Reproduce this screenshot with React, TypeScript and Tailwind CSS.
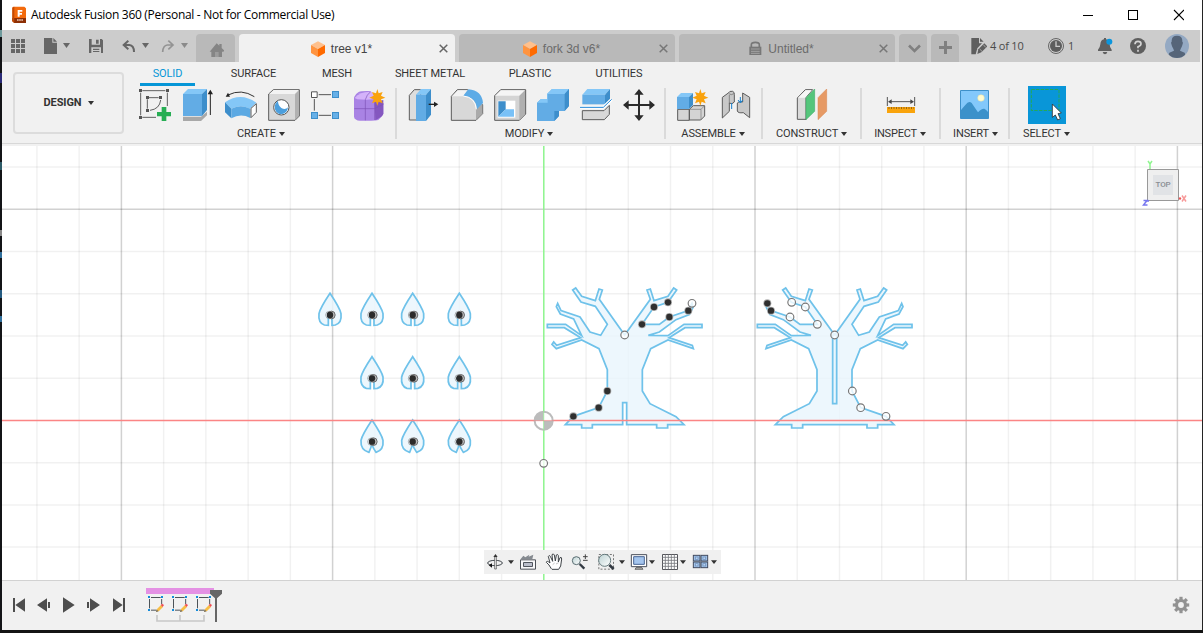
import React from "react";

type Kids = { children?: React.ReactNode };

/* Drawing surface: art uses a 3-units-per-pixel grid. */
function Art({ x, y, w, h, className = "", children }: { x: number; y: number; w: number; h: number; className?: string } & Kids) {
  return (
    <svg width={w} height={h} viewBox={`${x} ${y} ${w * 3} ${h * 3}`} className={`block shrink-0 ${className}`}>
      {children}
    </svg>
  );
}

function Caret({ className = "" }: { className?: string }) {
  return (
    <svg width="6" height="4" viewBox="0 0 6 4" className={`block shrink-0 ${className}`}>
      <path d="M0 0H6L3 4Z" fill="#333" />
    </svg>
  );
}

function OrangeCube() {
  return (
    <svg width="14" height="16" viewBox="0 0 42 48" className="block shrink-0">
      <path d="M21 1L42 12L21 24L0 12Z" fill="#ffc08c" />
      <path d="M0 12L21 24V48L0 36Z" fill="#ff9440" />
      <path d="M42 12L21 24V48L42 36Z" fill="#ff6a00" />
    </svg>
  );
}

function CloseX({ color }: { color: string }) {
  return (
    <svg width="9" height="9" viewBox="0 0 9 9" className="block shrink-0">
      <path d="M.7 .7L8.3 8.3M8.3 .7L.7 8.3" stroke={color} strokeWidth="1.5" />
    </svg>
  );
}

const star = "M1132 267L1136 280L1148 276L1143 287L1156 293L1143 298L1148 310L1136 305L1132 317L1128 305L1116 310L1121 298L1108 293L1121 287L1116 276L1128 280Z";

function TitleBar() {
  return (
    <div className="flex h-[30px] shrink-0 items-center bg-white pl-[10px] pr-[18px]">
      <Art x={33} y={15} w={15} h={18}>
        <path d="M36 17H70L75 22V66H40L34 60V20Z" fill="#f36a0c" />
        <path d="M34 51H75V66H40L34 61Z" fill="#8d2f05" />
        <path d="M34 20L40 17V66L34 60Z" fill="#c24a05" />
        <path d="M50 27H64V32H56V36H63V41H56V47H50Z" fill="#fff" />
        <path d="M48 57H66" stroke="#e8c8b8" strokeWidth="4" strokeDasharray="5 1.5" />
      </Art>
      <span className="ml-[4px] whitespace-nowrap font-['Open_Sans',sans-serif] text-[12px] leading-[18px] tracking-[-0.3px] text-black">
        Autodesk Fusion 360 (Personal - Not for Commercial Use)
      </span>
      <svg width="102" height="12" viewBox="0 0 102 12" className="ml-auto block" shapeRendering="crispEdges">
        <path d="M1 6.5H11M46.5 1.5H55.5V10.5H46.5Z" stroke="#000" fill="none" />
        <path d="M92 1L102 11M102 1L92 11" stroke="#000" strokeWidth="1.1" fill="none" shapeRendering="auto" />
      </svg>
    </div>
  );
}

function DocTab({ label, icon, active }: { label: string; icon: React.ReactNode; active?: boolean }) {
  return (
    <div className={`mr-[4px] flex h-7 w-[216px] items-center rounded-t-[4px] pr-[7px] ${active ? "bg-[#f1f1f1] text-[#444]" : "bg-[#b9b9b9] text-[#6b6b6b]"}`}>
      <div className="flex flex-1 items-center justify-center gap-[6px] pl-[5px] pt-px font-['Liberation_Sans',sans-serif] text-[12px] leading-[16px]">
        {icon}
        <span className="whitespace-nowrap">{label}</span>
      </div>
      <CloseX color={active ? "#666" : "#777"} />
    </div>
  );
}

function TabBar() {
  return (
    <div className="mr-[2px] flex h-8 shrink-0 items-end bg-[#ccc]">
      <Art x={6} y={90} w={194} h={32}>
        <g fill="#666">
          {[33, 48, 63].map((cx) => [117, 132, 147].map((cy) => <rect key={`${cx}-${cy}`} x={cx} y={cy} width="12" height="12" />))}
          <path d="M132 114H157V128H171V162H132ZM160 114L171 125H160Z" />
          <path d="M189 129H210L199.500 144Z" />
          <path fillRule="evenodd" d="M267 117H305L309 121V159H267ZM275 117V134H300V117ZM274 142V159H303V142Z" />
          <path d="M288 119H296V131H288ZM279 146H298V150H279ZM279 153H298V156H279Z" />
          <path d="M426 129H447L436.500 144Z" />
        </g>
        <path d="M385 122L371 135L385 148M371 135H388Q402 136 402 156" fill="none" stroke="#666" strokeWidth="6" />
        <g opacity=".55">
          <path d="M505 122L519 135L505 148M519 135H502Q489 136 488 156" fill="none" stroke="#666" strokeWidth="5" />
          <path d="M543 129H564L553.500 144Z" fill="#555" />
        </g>
      </Art>
      <div className="mr-[4px] flex h-7 w-[39px] items-center justify-center rounded-t-[4px] bg-[#b9b9b9] pl-[2px] pt-[3px]">
        <Art x={627} y={126} w={15} h={14}>
          <path d="M650 127L658 134V129H665V141L673 149L670 152H666V168H634V152H629Z" fill="#858585" />
          <path d="M645 168V153H656V168" fill="#9c9c9c" />
        </Art>
      </div>
      <DocTab active label="tree v1*" icon={<OrangeCube />} />
      <DocTab label="fork 3d v6*" icon={<OrangeCube />} />
      <DocTab
        label="Untitled*"
        icon={
          <Art x={1046} y={125} w={13} h={15}>
            <path d="M1053 143V136Q1053 129 1065 129Q1077 129 1077 136V143" fill="none" stroke="#777" strokeWidth="5" />
            <path d="M1047 142H1083V167H1047Z" fill="#777" />
            <path d="M1052 149H1078M1052 156H1078M1052 162H1078" stroke="#b9b9b9" strokeWidth="2" />
          </Art>
        }
      />
      <div className="mr-[4px] flex h-7 w-7 items-center justify-center rounded-t-[4px] bg-[#b9b9b9] pl-[2px] pt-px">
        <svg width="13" height="9" viewBox="0 0 13 9"><path d="M1 1.500L6.500 7L12 1.500" fill="none" stroke="#808080" strokeWidth="2.600" /></svg>
      </div>
      <div className="flex h-7 w-7 items-center justify-center rounded-t-[4px] bg-[#b9b9b9] pb-px">
        <svg width="13" height="13" viewBox="0 0 13 13"><path d="M6.500 0V13M0 6.500H13" stroke="#808080" strokeWidth="3" /></svg>
      </div>
      <div className="flex h-8 flex-1 items-center font-['Open_Sans',sans-serif] text-[11px] text-[#4a4a4a]">
        <Art x={509} y={108} w={17} h={20} className="ml-[11px]">
          <path d="M513 114H536V130H545L531 145L526 163H513ZM539 114L550 125H539Z" fill="#5e5e5e" />
          <path d="M531 162L534 148L552 130L561 139L543 157Z" fill="#5e5e5e" />
          <path d="M538 147L545 154M549 134L556 142" stroke="#ccc" strokeWidth="2" />
        </Art>
        <span className="ml-[3px] w-[36px] whitespace-nowrap leading-[16px] tracking-[-0.2px]">4 of 10</span>
        <Art x={741} y={111} w={18} h={18} className="ml-[21px]">
          <circle cx="768" cy="138" r="22.500" fill="none" stroke="#666" strokeWidth="3" />
          <circle cx="768" cy="138" r="18" fill="#5e5e5e" />
          <path d="M768 124V139H780" fill="none" stroke="#ccc" strokeWidth="4" />
        </Art>
        <span className="ml-[3px] w-[8px]">1</span>
        <Art x={891} y={108} w={17} h={20} className="ml-[21px]">
          <path d="M894 153V149Q900 144 901 133Q902 120 912 118V114H918V118Q928 120 929 133Q929 144 935 149V153ZM908 156H922Q920 163 915 163Q910 163 908 156Z" fill="#606060" />
          <circle cx="928" cy="125" r="9" fill="#0b96dd" />
        </Art>
        <Art x={987} y={111} w={18} h={18} className="ml-[15px]">
          <circle cx="1014" cy="138" r="24" fill="#5e5e5e" />
          <path d="M1005 133Q1005 124 1014 124Q1023 124 1023 131Q1023 137 1014 140V145M1014 149V155" fill="none" stroke="#d4d4d4" strokeWidth="5" />
        </Art>
        <Art x={1095} y={101} w={24} h={24} className="ml-[18px] rounded-full">
          <rect x="1095" y="101" width="72" height="74" fill="#94a9c3" />
          <path d="M1131 106Q1148 106 1147 124L1149 127L1146 138Q1141 148 1140 151L1154 157Q1157 164 1155 174H1107Q1104 162 1108 157L1122 151Q1121 147 1116 138L1113 127L1115 124Q1114 106 1131 106Z" fill="#566579" />
        </Art>
      </div>
    </div>
  );
}

const workspaces = [
  { label: "SOLID", cls: "w-[55px] text-[#0696d7]" },
  { label: "SURFACE", cls: "ml-[35px] w-[47px]" },
  { label: "MESH", cls: "ml-[46px] w-[28px]" },
  { label: "SHEET METAL", cls: "ml-[45px] w-[68px]" },
  { label: "PLASTIC", cls: "ml-[45px] w-[42px]" },
  { label: "UTILITIES", cls: "ml-[46px] w-[44px]" },
];

function Group({ label, width, labelPad = "", children }: { label: string; width: string; labelPad?: string } & Kids) {
  return (
    <div className={`flex shrink-0 flex-col items-center ${width}`}>
      <div className="flex h-[38px] justify-center">{children}</div>
      <div className={`flex h-5 items-center justify-center gap-[3px] whitespace-nowrap ${labelPad}`}>
        <span>{label}</span>
        <Caret />
      </div>
    </div>
  );
}

function Sep({ className }: { className: string }) {
  return <div className={`mt-[2px] h-[51px] w-[2px] shrink-0 bg-[#dadada] ${className}`} />;
}

const Slot = ({ x, children }: { x: number } & Kids) => (
  <Art x={x} y={258} w={43} h={38}>{children}</Art>
);

const edge = { stroke: "#5c5c5c", strokeWidth: 3, strokeLinejoin: "round" as const };

function Ribbon() {
  return (
    <div className="flex h-[81px] shrink-0 bg-[#f1f1f1] font-['Roboto',sans-serif] text-[11px] leading-[14px] tracking-[-0.1px] text-[#333]">
      <div className="ml-[11px] mt-[10px] flex h-[62px] w-[111px] shrink-0 items-center justify-center gap-[6px] rounded-[4px] border-2 border-[#dcdcdc] font-bold">
        <span>DESIGN</span>
        <Caret />
      </div>
      <div className="flex flex-1 flex-col">
        <div className="flex h-6 shrink-0 pl-[16px]">
          {workspaces.map((w, i) => (
            <div key={w.label} className={`flex shrink-0 flex-col items-center whitespace-nowrap pt-[5px] ${w.cls}`}>
              {w.label}
              {i === 0 && <div className="mt-[2px] h-[3px] w-full bg-[#0696d7]" />}
            </div>
          ))}
        </div>
        <div className="flex shrink-0 pl-[9px]">
          <Group label="CREATE" width="w-[258px]" labelPad="pr-[2px]">
            <Slot x={399}>
              <path d="M427 272H496M422 278V346M502 278V318M427 352H468M447 293H476M442 298V326M450 331Q479 327 482 300" fill="none" stroke="#606060" strokeWidth="3" />
              <path d="M417 267H426V276H417ZM498 267H507V276H498ZM417 348H426V357H417ZM438 288H447V297H438ZM477 288H486V297H477ZM438 327H447V336H438Z" fill="#555" />
              <path d="M485 321H499V336H513V349H499V363H485V349H471V336H485Z" fill="#27ae54" />
            </Slot>
            <Slot x={528}>
              <path d="M549 350H603L621 335V346L603 363H549Z" fill="#a8a8a8" />
              <path d="M549 282L564 267H621L606 282Z" fill="#84c7f7" />
              <path d="M549 282H606V348H549Z" fill="#62ace5" />
              <path d="M606 282L621 267V330L606 348Z" fill="#3d8ecb" />
              <path d="M631 276V345" stroke="#222" strokeWidth="3" />
              <path d="M631 269L639 283H623Z" fill="#222" />
            </Slot>
            <Slot x={657}>
              <path d="M675 307Q722 274 769 308L750 326Q722 311 694 326Z" fill="#84c7f7" />
              <path d="M675 307L694 326V355L675 337Z" fill="#3d8ecb" />
              <path d="M694 326Q722 311 751 326V354Q722 339 694 355Z" fill="#5ca9e3" />
              <path d="M753 325L769 311V337L753 353Z" fill="#fff" {...edge} />
              <path d="M684 285Q724 265 763 290" fill="none" stroke="#333" strokeWidth="3" />
              <path d="M677 290L684 278L690 290Z" fill="#222" />
            </Slot>
            <Slot x={786}>
              <path d="M806 282L820 269H898V348L885 361H806Z" fill="#d8d8d8" {...edge} />
              <path d="M808 282L821 270H896L884 282Z" fill="#f3f3f3" />
              <path d="M885 283L897 271V347L885 359Z" fill="#b1b1b1" />
              <circle cx="844" cy="322" r="23" fill="#fff" stroke="#555" strokeWidth="3" />
              <path d="M834 303Q824 310 824 323Q826 341 844 343Q862 341 864 322Q856 331 844 324Q834 316 834 303Z" fill="#4c9fdd" />
            </Slot>
            <Slot x={915}>
              <path d="M956 284H993M943 297V332M956 346H993" stroke="#555" strokeWidth="3" />
              <path d="M934.500 275.500H951.500V292.500H934.500Z" fill="#fff" stroke="#555" strokeWidth="3" />
              <path d="M996 273H1017V294H996ZM933 336H954V357H933ZM996 336H1017V357H996Z" fill="#3e8fca" />
              <path d="M999 276H1014V291H999ZM936 339H951V354H936ZM999 339H1014V354H999Z" fill="#66b0e8" />
            </Slot>
            <Slot x={1044}>
              <path d="M1062 292Q1064 283 1076 276Q1084 272 1110 273L1150 310V340Q1148 350 1136 359Q1130 363 1080 362Q1064 361 1062 350Z" fill="#a983e4" />
              <path d="M1064 294Q1080 274 1112 275L1138 295Q1110 302 1072 298Z" fill="#d4b2fa" />
              <path d="M1124 306L1150 300V342Q1147 350 1126 361Z" fill="#8457bf" />
              <path d="M1063 326H1124L1151 312M1096 299V361M1124 306V360M1096 299Q1100 284 1112 275" fill="none" stroke="#7c50b5" strokeWidth="2" />
              <path d={star} fill="#f9a20d" />
            </Slot>
          </Group>
          <Sep className="ml-[4px] mr-[5px]" />
          <Group label="MODIFY" width="w-[258px]" labelPad="pr-[4px]">
            <Slot x={6}>
              <path d="M28 286L43 269H62V360H28Z" fill="#ddd" {...edge} />
              <path d="M48 284L63 267H93L78 284Z" fill="#84c7f7" />
              <path d="M48 284H78V363H48Z" fill="#62ace5" />
              <path d="M78 284L93 267V344L78 363Z" fill="#3d8ecb" />
              <path d="M86 313H106" stroke="#222" strokeWidth="4" />
              <path d="M102 305L115 313L102 321Z" fill="#222" />
            </Slot>
            <Slot x={135}>
              <path d="M154 289L172 269H203L248 314V341L228 361H154Z" fill="#d8d8d8" {...edge} />
              <path d="M156 289L174 271H202L190 289Z" fill="#f3f3f3" />
              <path d="M228 327L247 310V341L228 360Z" fill="#aaa" />
              <path d="M190 287L205 268Q246 272 249 309L231 327Q228 291 190 287Z" fill="#5dabe6" />
              <path d="M190 288Q226 292 229 328" fill="none" stroke="#fff" strokeWidth="3" />
            </Slot>
            <Slot x={264}>
              <path d="M284 287L302 269H377V342L358 361H284Z" fill="#d4d4d4" {...edge} />
              <path d="M286 287L303 271H375L358 287Z" fill="#f5f5f5" />
              <path d="M358 288L375 271V341L358 359Z" fill="#b0b0b0" />
              <path d="M293 302H346V353H293Z" fill="#fff" />
              <path d="M295 304H317V328L295 350Z" fill="#3d8ecb" />
              <path d="M317 328H342V350H295Z" fill="#79c1f7" />
            </Slot>
            <Slot x={393}>
              <path d="M411 308L423 297H441V282L456 267H507V318L494 333H477V348L463 363H411Z" fill="#62ace5" />
              <path d="M411 308L423 297H441V282L456 267H507L494 282H443V308Z" fill="#84c7f7" />
              <path d="M494 282L507 267V318L494 333ZM463 333H477V348L463 363Z" fill="#3d8ecb" />
            </Slot>
            <Slot x={522}>
              <path d="M547 284L562 267H630L615 284Z" fill="#84c7f7" />
              <path d="M547 284H615V313H547Z" fill="#62ace5" />
              <path d="M615 284L630 267V298L615 313Z" fill="#3d8ecb" />
              <path d="M547 332H612L628 316V343L613 359H547Z" fill="#d8d8d8" {...edge} />
              <path d="M540 322H610L635 298" fill="none" stroke="#fff" strokeWidth="9" />
              <path d="M540 322H610L635 298" fill="none" stroke="#2186d6" strokeWidth="3" />
            </Slot>
            <Slot x={651}>
              <path d="M717 280V350M684 315H750" stroke="#2b2b2b" strokeWidth="6" />
              <path d="M717 267L731 284H703ZM717 363L731 346H703ZM669 315L686 301V329ZM765 315L748 301V329Z" fill="#2b2b2b" />
            </Slot>
          </Group>
          <Sep className="ml-[4px] mr-[6px]" />
          <Group label="ASSEMBLE" width="w-[86px]" labelPad="pr-[4px]">
            <Slot x={816}>
              <path d="M833 328H868V361H833ZM868 328L880 317H914V348L902 360H868Z" fill="#d4d4d4" {...edge} />
              <path d="M870 328H903V359M903 328L913 318" fill="none" stroke="#777" strokeWidth="2" />
              <path d="M831 291L843 279H879L867 291Z" fill="#84c7f7" />
              <path d="M831 291H867V327H831Z" fill="#62ace5" />
              <path d="M867 291L879 279V315L867 327Z" fill="#3d8ecb" />
              <path d={star} fill="#f9a20d" transform="translate(-231 0)" />
            </Slot>
            <Slot x={945}>
              <path d="M967 292L985 279Q988 272 998 274Q1004 277 1003 283V306Q996 315 988 309V334L967 354Z" fill="#c8c8c8" {...edge} />
              <path d="M986 281Q994 287 1002 281M988 285V310" fill="none" stroke="#666" strokeWidth="2" />
              <path d="M1028 279L1049 292V353L1030 338Q1014 340 1012 333V309Q1015 303 1028 306Z" fill="#c8c8c8" {...edge} />
              <path d="M995 309V327M1021 291V307" stroke="#1681cf" strokeWidth="3" />
              <path d="M1014 300L1021 309L1028 300" fill="none" stroke="#1681cf" strokeWidth="3" />
            </Slot>
          </Group>
          <Sep className="ml-[3px] mr-[13px]" />
          <Group label="CONSTRUCT" width="w-[72px]" labelPad="pr-px">
            <Slot x={-27}>
              <path d="M-8 294L16 269H38L18 292V358H-8Z" fill="#dadada" {...edge} />
              <path d="M-6 293L17 271H35L16 293Z" fill="#f7f7f7" />
              <path d="M18 293L44 267V334L18 359Z" fill="#54c57b" stroke="#37a860" strokeWidth="1.500" />
              <path d="M54 293L80 267V334L54 359Z" fill="#e69a65" stroke="#d9844c" strokeWidth="1.500" />
            </Slot>
          </Group>
          <Sep className="ml-[12px] mr-[13px]" />
          <Group label="INSPECT" width="w-[51px]" labelPad="pr-px tracking-[-0.2px]">
            <Slot x={237}>
              <path d="M262 291V318M344 291V318M270 305H336" stroke="#555" strokeWidth="3" />
              <path d="M264 305L275 298V312ZM342 305L331 298V312Z" fill="#444" />
              <path d="M261 321H345V339H261Z" fill="#f9a40c" />
              <path d="M266 324H342" stroke="#704d10" strokeWidth="6" strokeDasharray="2 5.500" />
            </Slot>
          </Group>
          <Sep className="ml-[13px] mr-[12px]" />
          <Group label="INSERT" width="w-[45px]">
            <Slot x={462}>
              <path d="M481.500 271.500H565.500V355.500H481.500Z" fill="#83c8fb" stroke="#3d90ca" strokeWidth="3" />
              <path d="M483 330Q490 322 496 315Q506 301 515 309Q525 324 534 337Q544 325 553 326Q560 330 564 336V354H483Z" fill="#3c91ca" />
              <circle cx="543" cy="294" r="10" fill="#fffbd0" stroke="#e5dba0" strokeWidth="1.500" />
            </Slot>
          </Group>
          <Sep className="ml-[10px] mr-[12px]" />
          <Group label="SELECT" width="w-[49px]">
            <Slot x={675}>
              <path d="M684 258H798V372H684Z" fill="#0996d8" />
              <path d="M694 268.500H777V331.500H694Z" fill="none" stroke="#24a958" strokeWidth="3" strokeDasharray="10 4" />
              <path d="M757 312L784 339L774 341L781 356L773 360L766 345L757 352Z" fill="#fff" stroke="#333" strokeWidth="2.500" />
            </Slot>
          </Group>
        </div>
      </div>
    </div>
  );
}

const leftHalf =
  "L208 88L217 60L207 57L196 92L155 79L137 54L128 60L153 96L196 109L232 163L212 196L180 186L150 141L93 122L83 100L79 110L91 132L131 147L155 197L107 163H52V173H103L152 203L80 226L71 216L66 223L79 236L155 210L207 236L232 299V363L206 413L130 439L106 464H155V474H187V464H278";
const rightHalf =
  "H380V474H413V464H462L438 440L360 401L337 363V299L362 236L414 210L490 236L487 226L417 203L465 173H516V163H462L414 197L355 196L388 186L438 149L478 134L489 112L486 100L475 122L418 141L388 163H336L372 111L414 97L440 60L431 54L414 79L372 92L361 57L351 60L361 88Z";
/* The second trunk mirrors the first, except for the foot on its plain side. */
const plainFoot = leftHalf;

const Solid = ({ p }: { p: number[] }) => (
  <g>
    <circle cx={p[0]} cy={p[1]} r="12" fill="#b0b0b0" />
    <circle cx={p[0]} cy={p[1]} r="9.500" fill="#2f2f2f" />
  </g>
);
const Hollow = ({ p }: { p: number[] }) => <circle cx={p[0]} cy={p[1]} r="11.500" fill="#fff" fillOpacity=".8" stroke="#777" strokeWidth="3.500" />;

function Canvas() {
  const step = 42.24;
  const cols = Array.from({ length: 28 }, (_, i) => i - 12);
  const rows = Array.from({ length: 10 }, (_, i) => i - 6);
  const leaves = [
    [90, 0], [216, 0], [338, 0], [478, 0],
    [216, 190], [338, 190], [478, 190],
    [216, 380], [338, 380], [478, 380],
  ];
  return (
    <div className="relative h-[434px] shrink-0 bg-white">
      <svg width="1200" height="434" viewBox="2 146 1200 434" className="block">
        <g stroke="#000" strokeWidth="1.500">
          {cols.map((i) => i !== 0 && <path key={i} d={`M${543.800 + i * step} 146V580`} strokeOpacity={i % 5 === 0 ? 0.18 : 0.055} />)}
          {rows.map((i) => i !== 0 && <path key={i} d={`M2 ${420.400 + i * step}H1202`} strokeOpacity={i % 5 === 0 ? 0.18 : 0.055} />)}
        </g>
        <path d="M543.800 146V580" stroke="#8df58d" strokeWidth="1.500" />
        <g fill="#e9f5fd" fillOpacity=".8" stroke="#6fc2ea" strokeWidth="5.200" strokeLinejoin="miter">
          <path transform="translate(530 270) scale(.33333)" d={`M284 195${leftHalf}V398H290V464${rightHalf}`} />
          <g transform="translate(740 270) scale(.33333)">
            <path transform="translate(568 0) scale(-1 1)" d={`M284 195${plainFoot}${rightHalf}`} />
            <path d="M278 195H290V401H278Z" />
          </g>
          <g transform="translate(300 280) scale(.33333)">
            {leaves.map(([x, y]) => (
              <path
                key={`${x}-${y}`}
                transform={`translate(${x} ${y})`}
                d={y === 380
                  ? "M0 40Q-30 85 -33 101Q-35 130 -9 137L-4 124L0 112L4 124L12 137Q36 130 33 101Q30 85 0 40Z"
                  : "M0 40Q-30 85 -33 101Q-36 129 -17 135L-5 136V109H6V136L16 135Q36 129 33 101Q30 85 0 40Z"}
              />
            ))}
          </g>
        </g>
        <path d="M2 420.500H1202" stroke="#fb8585" strokeWidth="1.300" />
        <g transform="translate(300 280) scale(.33333)">
          {leaves.map(([x, y]) => (
            <g key={`${x}-${y}`}>
              <circle cx={x + 4} cy={y + 105} r="11.500" fill="#bdbdbd" stroke="#666" strokeWidth="3" />
              <circle cx={x - 2} cy={y + 105} r="11" fill="none" stroke="#888" strokeWidth="2" />
              <circle cx={x} cy={y + 105} r="9.500" fill="#2b2b2b" />
            </g>
          ))}
        </g>
        <g transform="translate(530 270) scale(.33333)">
          <circle cx="41" cy="452" r="27" fill="#fff" fillOpacity=".85" stroke="#bcbcbc" strokeWidth="6" />
          <path d="M41 452V425A27 27 0 0 0 14 452ZM41 452V479A27 27 0 0 0 68 452Z" fill="#bcbcbc" />
          <path d="M41 421V483" stroke="#8df58d" strokeOpacity=".6" strokeWidth="3" />
          <path d="M11 452H71" stroke="#f96a6a" strokeOpacity=".5" strokeWidth="3" />
          {[[336, 163], [372, 111], [414, 97], [418, 141], [475, 122], [232, 363], [206, 413], [130, 439]].map((p) => <Solid key={p[0]} p={p} />)}
          {[[284, 195], [486, 100], [41, 580]].map((p) => <Hollow key={p[0]} p={p} />)}
        </g>
        <g transform="translate(740 270) scale(.33333)">
          {[[82, 100], [93, 122]].map((p) => <Solid key={p[0]} p={p} />)}
          {[[155, 97], [196, 111], [150, 141], [232, 163], [284, 195], [337, 363], [362, 413], [438, 439]].map((p) => <Hollow key={p[0]} p={p} />)}
        </g>
      </svg>
      <div className="absolute right-[14px] top-[12px] h-[54px] w-[46px]">
        <svg width="46" height="54" viewBox="1142 158 46 54" className="absolute left-0 top-0 block">
          <path d="M1147.500 169.500H1178.500V200.500H1147.500Z" fill="#efefef" stroke="#999" />
          <path d="M1153 175H1173V195H1153Z" fill="#e1e3e6" />
          <path d="M1148 161L1150 164L1152 161M1150 164V169" fill="none" stroke="#8ff58f" strokeWidth="1.500" />
          <path d="M1182 195.500L1186 201.500M1186 195.500L1182 201.500" stroke="#f79a9a" strokeWidth="1.500" />
          <circle cx="1180" cy="198.500" r="1.200" fill="#ee5555" />
          <path d="M1143.500 200.500H1147L1143.500 205H1147.500M1147 201H1149" fill="none" stroke="#7777f0" strokeWidth="1.500" />
        </svg>
        <div className="absolute left-[11px] top-[17px] flex h-5 w-5 items-center justify-center font-['Roboto',sans-serif] text-[8px] font-medium leading-none tracking-[-0.2px] text-[#898d93]">TOP</div>
      </div>
      <div className="absolute left-[482px] top-[404px] flex h-6 w-[237px] bg-[#f0f0f0]">
        <NavIcons />
      </div>
    </div>
  );
}

function NavIcons() {
  const line = { fill: "none", stroke: "#40464c", strokeWidth: 3 };
  return (
    <Art x={42} y={30} w={237} h={24}>
      <defs>
        <linearGradient id="lens" x2="1" y2="1"><stop stopColor="#bcd2d3" /><stop offset="1" stopColor="#fff" /></linearGradient>
      </defs>
      <ellipse cx="75" cy="69" rx="22" ry="8" {...line} />
      <path d="M74 50H79V87H74Z" fill="#f7f7f7" stroke="#444" strokeWidth="2" />
      <path d="M70 51L76.500 42L83 51Z" fill="#333" />
      <path d="M56 76L66 70V83Z" fill="#111" />
      {[123, 456, 546, 639, 732].map((x) => <path key={x} d={`M${x - 9} 61H${x + 9}L${x} 72Z`} fill="#333" />)}
      <path d="M151.500 59.500H196.500V87.500H151.500Z" fill="#f8f8fa" stroke="#4d5158" strokeWidth="3" />
      <path d="M160.500 67.500H187.500V79.500H160.500Z" fill="#b9bdca" stroke="#50555e" strokeWidth="3" />
      <path d="M152 57L160 47L166 52L178 44L176 50L190 44L187 57Z" fill="#858a90" />
      <path d="M244 86Q237 73 229 67Q230 60 240 69L235 49Q237 44 241 49L248 64L246 44Q250 39 253 45L256 63L259 45Q263 41 265 47V66L270 53Q275 50 275 57L272 78L266 88H246Z" fill="#fff" stroke="#3f4448" strokeWidth="3" strokeLinejoin="round" />
      <path d="M248 74L254 69M258 72L266 68" stroke="#888" strokeWidth="1.500" />
      <circle cx="319" cy="62" r="12" fill="url(#lens)" stroke="#596d72" strokeWidth="3" />
      <path d="M329 72L343 86" stroke="#333a43" strokeWidth="7" />
      <path d="M339 50H353M346 43V57M339 61H353" stroke="#444" strokeWidth="3" />
      <path d="M386.500 43.500H430.500V87.500H386.500Z" fill="none" stroke="#777" strokeWidth="3" strokeDasharray="6 5" />
      <circle cx="404" cy="61" r="18" fill="url(#lens)" stroke="#657a7d" strokeWidth="3" />
      <path d="M418 75L431 87" stroke="#333a43" strokeWidth="8" />
      <path d="M484 44H530V80H484Z" fill="#fff" stroke="#484c58" strokeWidth="3" />
      <path d="M491 50H523V73H491Z" fill="#a4c5ee" stroke="#4a6795" strokeWidth="3" />
      <path d="M499 82H515L519 88H495Z" fill="#a8a8a8" stroke="#444" strokeWidth="2" />
      <path d="M577.500 43.500H622.500V88.500H577.500Z" fill="#fff" stroke="#55565b" strokeWidth="3" />
      <path d="M586 43V88M595 43V88M604 43V88M613 43V88M577 52H622M577 61H622M577 70H622M577 79H622" stroke="#76777d" strokeWidth="2.500" />
      {[[670, 46], [693, 46], [670, 66], [693, 66]].map(([x, y]) => (
        <g key={`${x}-${y}`}>
          <rect x={x} y={y} width="20" height="17" fill="#9fc0e7" stroke="#424c60" strokeWidth="3" />
          <rect x={x + 6} y={y + 5} width="8" height="7" fill="#b6d2f1" stroke="#6b8bb6" strokeWidth="2" />
        </g>
      ))}
    </Art>
  );
}

function Timeline() {
  return (
    <div className="flex h-[50px] shrink-0 items-start border-t border-[#d2d2d2] bg-[#f1f1f1] pr-[12px]">
      <Art x={6} y={63} w={136} h={48}>
        <path fill="#4d4d4d" d="M39 114H45V156H39ZM75 115V155L46 135ZM111 135L141 115V155ZM144 126H150V144H144ZM189 112V158L224 135ZM261 126H267V144H261ZM270 115V155L300 135ZM339 115V155L368 135ZM369 114H375V156H369Z" />
      </Art>
      <Art x={414} y={63} w={100} h={48}>
        <path d="M438 84H642V102H438Z" fill="#e491e4" />
        {[0, 72, 144].map((dx) => (
          <g key={dx} transform={`translate(${dx} 0)`}>
            <path d="M453 112.500H482M448.500 117V145M485 117V132M453 150.500H470" fill="none" stroke="#4d5358" strokeWidth="3" />
            <path d="M444 108H450V114H444ZM483 108H489V114H483ZM444 147H450V153H444Z" fill="#138bd9" />
            <path d="M471 147L483 135L489 141L477 153L468 156Z" fill="#f7bd45" />
            <path d="M482 135L486 131L492 135L488 141Z" fill="#f04b52" />
            <path d="M468 156L470 149L476 154Z" fill="#666" />
          </g>
        ))}
        <path d="M471 165V183H612V165M540 165V183" fill="none" stroke="#c8c8c8" strokeWidth="5" />
        <path d="M630 90H666V101L651 115V186H645V115L630 101Z" fill="#666" />
      </Art>
      <svg width="18" height="18" viewBox="-9 -9 18 18" className="ml-auto mt-[15px] block">
        <circle r="4.500" fill="none" stroke="#929292" strokeWidth="3.200" />
        {[0, 45, 90, 135, 180, 225, 270, 315].map((a) => <rect key={a} x="-1.600" y="-8.200" width="3.200" height="3.500" fill="#929292" transform={`rotate(${a})`} />)}
      </svg>
    </div>
  );
}

export default function App() {
  return (
    <div className="flex h-[633px] w-[1203px] flex-col overflow-hidden bg-[#141414]">
      <div className="flex h-[630px]">
        <div className="flex w-[2px] shrink-0 flex-col bg-[#131417]">
          <div className="mt-[30px] h-[7px] bg-[#6f9a9c]" />
          <div className="mt-[36px] h-[10px] bg-[#2b2b78]" />
          <div className="mt-[79px] h-[8px] bg-[#2d5b68]" />
          <div className="mt-[60px] h-[6px] bg-[#888]" />
          <div className="mt-[16px] h-[6px] bg-[#2f6f9c]" />
          <div className="mt-[32px] h-[8px] bg-[#245a80]" />
          <div className="mt-[18px] h-[6px] bg-[#2f6f9c]" />
        </div>
        <div className="flex w-[1200px] shrink-0 flex-col bg-[#f1f1f1]">
          <TitleBar />
          <TabBar />
          <Ribbon />
          <div className="mb-[2px] h-px shrink-0 bg-[#d8d8d8]" />
          <Canvas />
          <Timeline />
        </div>
        <div className="w-px bg-[#242424]" />
      </div>
    </div>
  );
}
